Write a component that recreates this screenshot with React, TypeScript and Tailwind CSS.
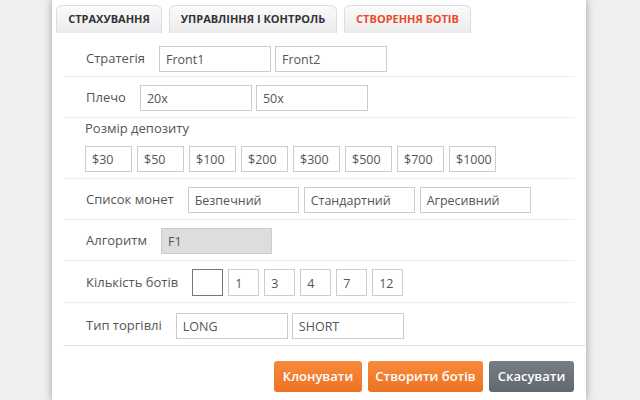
import React from "react";

const font = { fontFamily: '"Open Sans", "Liberation Sans", sans-serif' };

function Field({ text, w = "w-[112px]", className = "" }: { text?: string; w?: string; className?: string }) {
  return (
    <div
      className={`flex h-[26px] items-center border border-[#cccccc] pl-[6px] pt-[3px] text-[12.5px] text-[#555] ${w} ${className}`}
    >
      {text}
    </div>
  );
}

function Row({ label, children, className = "" }: { label: string; children: React.ReactNode; className?: string }) {
  return (
    <div className={`flex items-center border-b border-[#eeeeee] pl-[22px] ${className}`}>
      <span className="mr-[14px] text-[13px] text-[#555]">{label}</span>
      <div className="flex gap-[4px]">{children}</div>
    </div>
  );
}

export default function App() {
  const deposits = ["$30", "$50", "$100", "$200", "$300", "$500", "$700", "$1000"];
  const bots = ["1", "3", "4", "7", "12"];

  return (
    <div className="h-[400px] w-[640px] overflow-hidden bg-[#efefef]" style={font}>
      <div className="ml-[52px] flex h-full w-[534px] flex-col bg-white shadow-[0_0_8px_rgba(0,0,0,0.35)]">
        {/* tabs */}
        <div className="flex gap-[7px] pl-[4px] pt-[5px]">
          {[
            { t: "Страхування", w: "w-[106px]", c: "text-[#333]" },
            { t: "Управління і контроль", w: "w-[168px]", c: "text-[#333]" },
            { t: "Створення ботів", w: "w-[127px]", c: "text-[#e8492c]" },
          ].map((tab) => (
            <div
              key={tab.t}
              className={`flex h-[28px] items-center justify-center rounded-t-[6px] border border-b-0 border-[#dddddd] bg-gradient-to-b from-[#fafafa] to-[#ececec] text-[11px] font-bold uppercase ${tab.w} ${tab.c}`}
            >
              {tab.t}
            </div>
          ))}
        </div>

        {/* rows */}
        <div className="ml-[12px] mr-[11px] flex flex-col pt-[5px]">
          <Row label="Стратегія" className="h-[39px] pt-[3px]">
            <Field text="Front1" />
            <Field text="Front2" />
          </Row>
          <Row label="Плечо" className="h-[41px] pt-[2px] pl-[21px]">
            <Field text="20x" />
            <Field text="50x" />
          </Row>
          <div className="flex h-[61px] flex-col border-b border-[#eeeeee] pl-[21px] pt-[1px]">
            <span className="text-[13px] text-[#555]">Розмір депозиту</span>
            <div className="mt-[7px] flex gap-[5px]">
              {deposits.map((d) => (
                <Field key={d} text={d} w="w-[47px]" />
              ))}
            </div>
          </div>
          <Row label="Список монет" className="h-[41px] pt-[1px]">
            <Field text="Безпечний" w="w-[111px]" />
            <Field text="Стандартний" w="w-[111px]" className="ml-[1px]" />
            <Field text="Агресивний" w="w-[111px]" className="ml-[1px]" />
          </Row>
          <Row label="Алгоритм" className="h-[41px] pt-[1px]">
            <Field text="F1" w="w-[111px] bg-[#dddddd]" />
          </Row>
          <Row label="Кількість ботів" className="h-[42px] pt-[2px]">
            <div className="flex gap-[5px]">
              <div className="h-[27px] w-[31px] border border-[#777]" />
              {bots.map((b) => (
                <Field key={b} text={b} w="w-[31px] h-[27px]" />
              ))}
            </div>
          </Row>
          <Row label="Тип торгівлі" className="h-[42px] pt-[3px] border-b-0">
            <Field text="LONG" />
            <Field text="SHORT" />
          </Row>
        </div>

        {/* footer */}
        <div className="ml-[11px] flex justify-end gap-[6px] border-t border-[#e2e2e2] pr-[12px] pt-[15px]">
          <button className="h-[31px] w-[88px] rounded-[3px] bg-gradient-to-b from-[#f68a3c] to-[#ed7322] text-[13px] font-semibold text-white">
            Клонувати
          </button>
          <button className="h-[31px] w-[115px] rounded-[3px] bg-gradient-to-b from-[#f68a3c] to-[#ed7322] text-[13px] font-semibold text-white">
            Створити ботів
          </button>
          <button className="h-[31px] w-[85px] rounded-[3px] bg-gradient-to-b from-[#767d85] to-[#61686f] text-[13px] font-semibold text-white">
            Скасувати
          </button>
        </div>
      </div>
    </div>
  );
}
